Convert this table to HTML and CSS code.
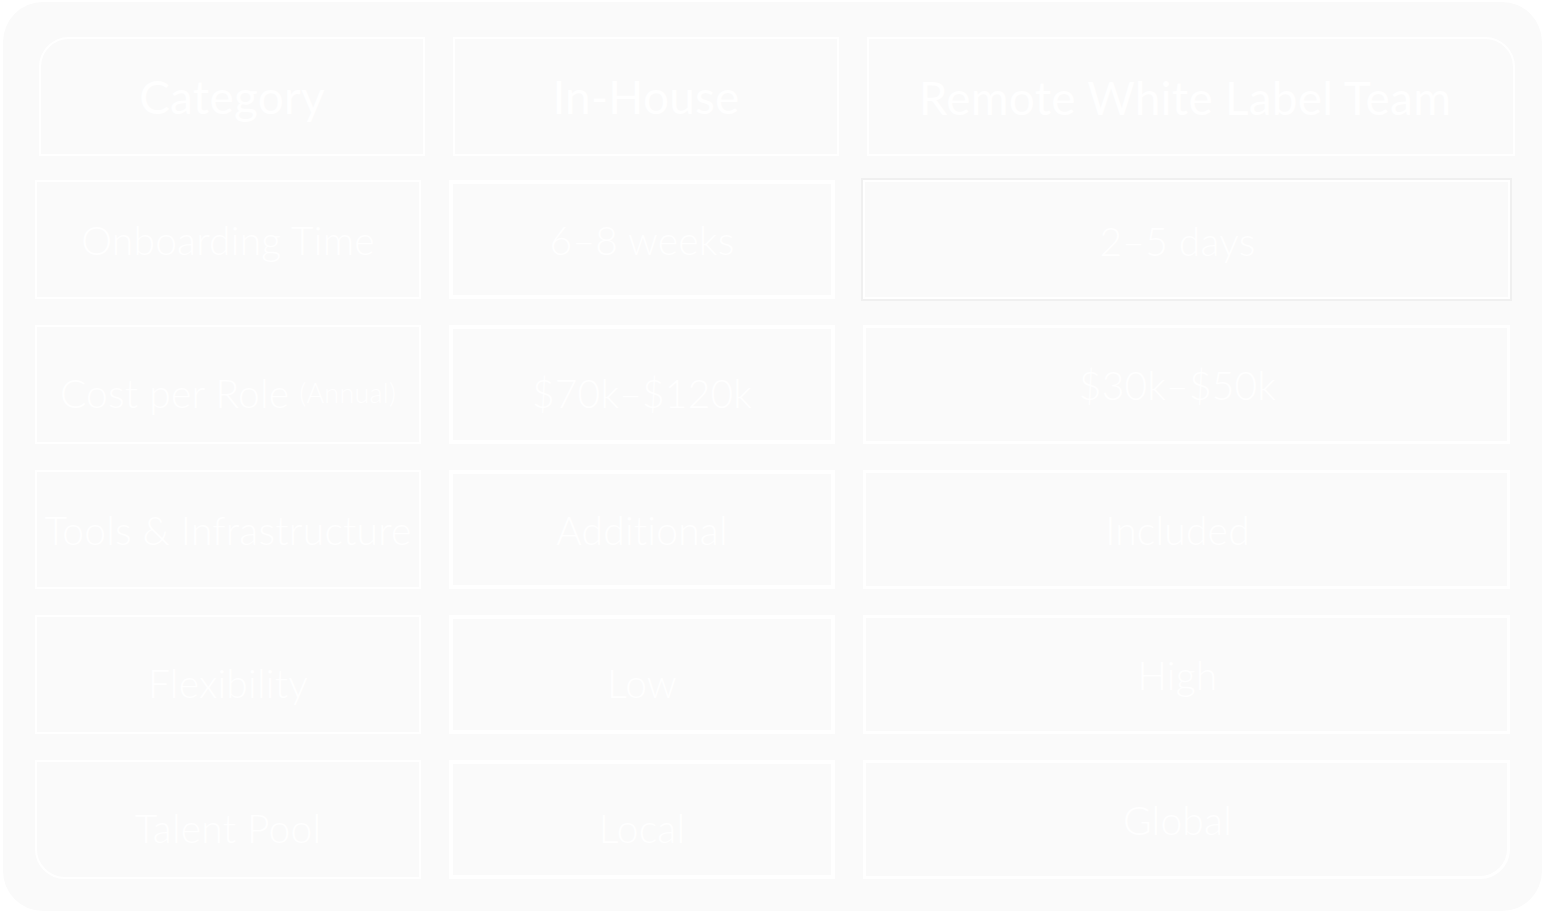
FILE: index.html
```html
<!DOCTYPE html>
<html lang="en">
<head>
<meta charset="utf-8">
<title>Comparison</title>
<link rel="stylesheet" href="styles.css">
</head>
<body>
<div class="card">
  <div class="row head">
    <div class="cell c1 tl">Category</div>
    <div class="cell c2">In-House</div>
    <div class="cell c3 tr">Remote White Label Team</div>
  </div>
  <div class="row">
    <div class="cell c1">Onboarding Time</div>
    <div class="cell c2">6–8 weeks</div>
    <div class="cell c3 hl">2–5 days</div>
  </div>
  <div class="row">
    <div class="cell c1 low">Cost per Role <small>(Annual)</small></div>
    <div class="cell c2 low">$70k–$120k</div>
    <div class="cell c3">$30k–$50k</div>
  </div>
  <div class="row">
    <div class="cell c1">Tools &amp; Infrastructure</div>
    <div class="cell c2">Additional</div>
    <div class="cell c3">Included</div>
  </div>
  <div class="row">
    <div class="cell c1 low">Flexibility</div>
    <div class="cell c2 low">Low</div>
    <div class="cell c3">High</div>
  </div>
  <div class="row">
    <div class="cell c1 low bl">Talent Pool</div>
    <div class="cell c2 low">Local</div>
    <div class="cell c3 br">Global</div>
  </div>
</div>
</body>
</html>
```
FILE: styles.css
```css
html, body {
  margin: 0;
  padding: 0;
  background: #ffffff;
}
body {
  padding: 2px 3px 3px 3px;
  font-family: "Lato", "Noto Sans", sans-serif;
  color: #ffffff;
}
.card {
  width: 1539px;
  height: 909px;
  box-sizing: border-box;
  background: #fafafa;
  border-radius: 40px;
  padding: 35px 0 0 32px;
  display: flex;
  flex-direction: column;
  gap: 26px;
}
.row {
  display: grid;
  grid-template-columns: 386px 386px 647px;
  column-gap: 28px;
  height: 119px;
}
.row.head {
  margin-left: 4px;
  margin-bottom: -2px;
  grid-template-columns: 386px 386px 648px;
}
.cell {
  box-sizing: border-box;
  border: 2px solid #ffffff;
  display: flex;
  align-items: center;
  justify-content: center;
  font-size: 39px;
  font-weight: 300;
  white-space: nowrap;
  letter-spacing: 0.2px;
}
.head .cell {
  font-size: 46px;
  font-weight: 400;
}
.c2 { border-width: 4px; }
.c3 { border-width: 3px; padding-right: 18px; }
.head .c2 { border-width: 2px; }
.head .c3 { border-width: 2px; padding-right: 12px; padding-top: 2px; }
.low { padding-top: 16px; }
.cell small { font-size: 27px; margin-left: 10px; }
.hl {
  border: 2px solid #ffffff;
  box-shadow: 0 0 0 2px #f0f0f0;
  padding-top: 2px;
}
.tl { border-top-left-radius: 30px; }
.tr { border-top-right-radius: 30px; }
.bl { border-bottom-left-radius: 30px; }
.br { border-bottom-right-radius: 30px; }
```
